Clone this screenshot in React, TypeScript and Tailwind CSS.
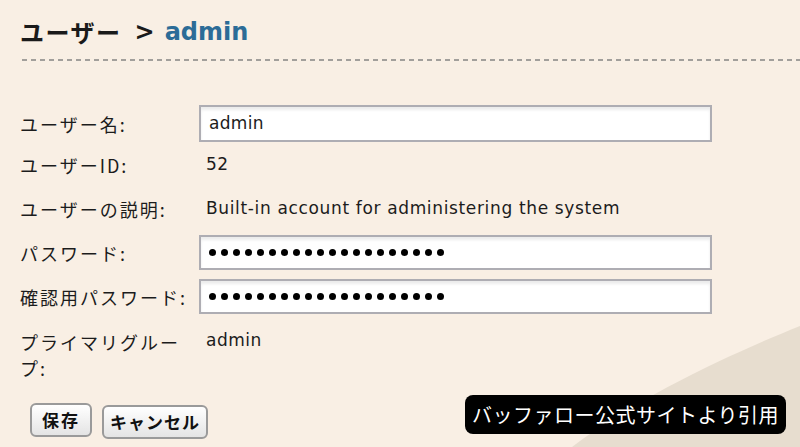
import React from "react";

const jp = "font-['Noto_Sans_CJK_JP','Noto_Sans_CJK_SC',sans-serif]";
const latin = "font-['DejaVu_Sans','Noto_Sans_CJK_JP',sans-serif]";

function Label({ children }: { children: React.ReactNode }) {
  return (
    <div className={`w-[179px] shrink-0 pr-[6px] text-[18px] leading-[26px] tracking-[2px] text-[#1c1c1c] ${jp}`}>
      {children}
    </div>
  );
}

function Field({ children }: { children: React.ReactNode }) {
  return (
    <div className="w-[513px] h-full flex items-center px-[8px] bg-white border-2 border-[#aeadb3] shadow-[inset_0_3px_3px_rgba(0,0,0,0.08)]">
      {children}
    </div>
  );
}

function Dots({ count }: { count: number }) {
  return (
    <div className="flex items-center gap-[5px]">
      {Array.from({ length: count }).map((_, i) => (
        <span key={i} className="block w-[7px] h-[7px] rounded-full bg-black" />
      ))}
    </div>
  );
}

export default function App() {
  return (
    <div className="relative w-[800px] h-[447px] overflow-hidden bg-[#f9efe4]">
      {/* background swoosh */}
      <svg className="absolute inset-0" width="800" height="447" viewBox="0 0 800 447">
        <path d="M800 326 C 740 350, 640 395, 572 447 L 800 447 Z" fill="#e7ddcf" />
      </svg>

      <div className="relative pl-[20px] pt-[16px]">
        {/* HEADER */}
        <h1 className="flex items-center h-[32px] text-[24px] font-bold text-[#1a1a1a]">
          <span className={`${jp} tracking-[1.5px]`}>ユーザー</span>
          <span className={`${latin} ml-[13px]`}>&gt;</span>
          <span className={`${latin} ml-[10px] text-[#2c6c97]`}>admin</span>
        </h1>
        <div className="mt-[11px] ml-[2px] h-[2px] bg-[repeating-linear-gradient(90deg,#a29f9b_0_5px,transparent_5px_9px)]" />

        {/* FORM */}
        <div className="mt-[44px] flex flex-col">
          <div className="flex items-center h-[37px]">
            <Label>ユーザー名:</Label>
            <Field>
              <span className={`${latin} text-[17px] tracking-[0.3px] text-[#1c1c1c]`}>admin</span>
            </Field>
          </div>

          <div className="flex items-center h-[46px]">
            <Label>ユーザーID:</Label>
            <span className={`${latin} pl-[7px] text-[17px] tracking-[0.5px] text-[#1c1c1c]`}>52</span>
          </div>

          <div className="flex items-center h-[42px]">
            <Label>ユーザーの説明:</Label>
            <span className={`${latin} pl-[7px] text-[17px] tracking-[0.65px] text-[#1c1c1c]`}>
              Built-in account for administering the system
            </span>
          </div>

          <div className="flex items-center h-[35px] mt-[5px]">
            <Label>パスワード:</Label>
            <Field>
              <Dots count={20} />
            </Field>
          </div>

          <div className="flex items-center h-[35px] mt-[9px]">
            <Label>確認用パスワード:</Label>
            <Field>
              <Dots count={20} />
            </Field>
          </div>

          <div className="flex items-start mt-[15px]">
            <Label>プライマリグループ:</Label>
            <span className={`${latin} pl-[7px] text-[17px] tracking-[0.5px] leading-[22px] text-[#1c1c1c]`}>admin</span>
          </div>
        </div>

        {/* ACTIONS */}
        <div className={`mt-[22px] ml-[10px] flex items-start gap-[10px] ${jp}`}>
          <button className="w-[62px] h-[34px] rounded-[6px] border-2 border-[#9a9a9a] bg-[linear-gradient(#ffffff,#e4e4e4)] text-[17px] font-bold text-[#111] tracking-[2px]">
            保存
          </button>
          <button className="mt-[2px] w-[106px] h-[34px] rounded-[6px] border-2 border-[#9a9a9a] bg-[linear-gradient(#ffffff,#e4e4e4)] text-[17px] font-bold text-[#111] tracking-[1px]">
            キャンセル
          </button>
        </div>
      </div>

      {/* caption badge */}
      <div className={`absolute left-[465px] top-[395px] w-[321px] h-[39px] rounded-[8px] bg-black flex items-center justify-center text-white text-[20px] tracking-[0.5px] ${jp}`}>
        バッファロー公式サイトより引用
      </div>
    </div>
  );
}
